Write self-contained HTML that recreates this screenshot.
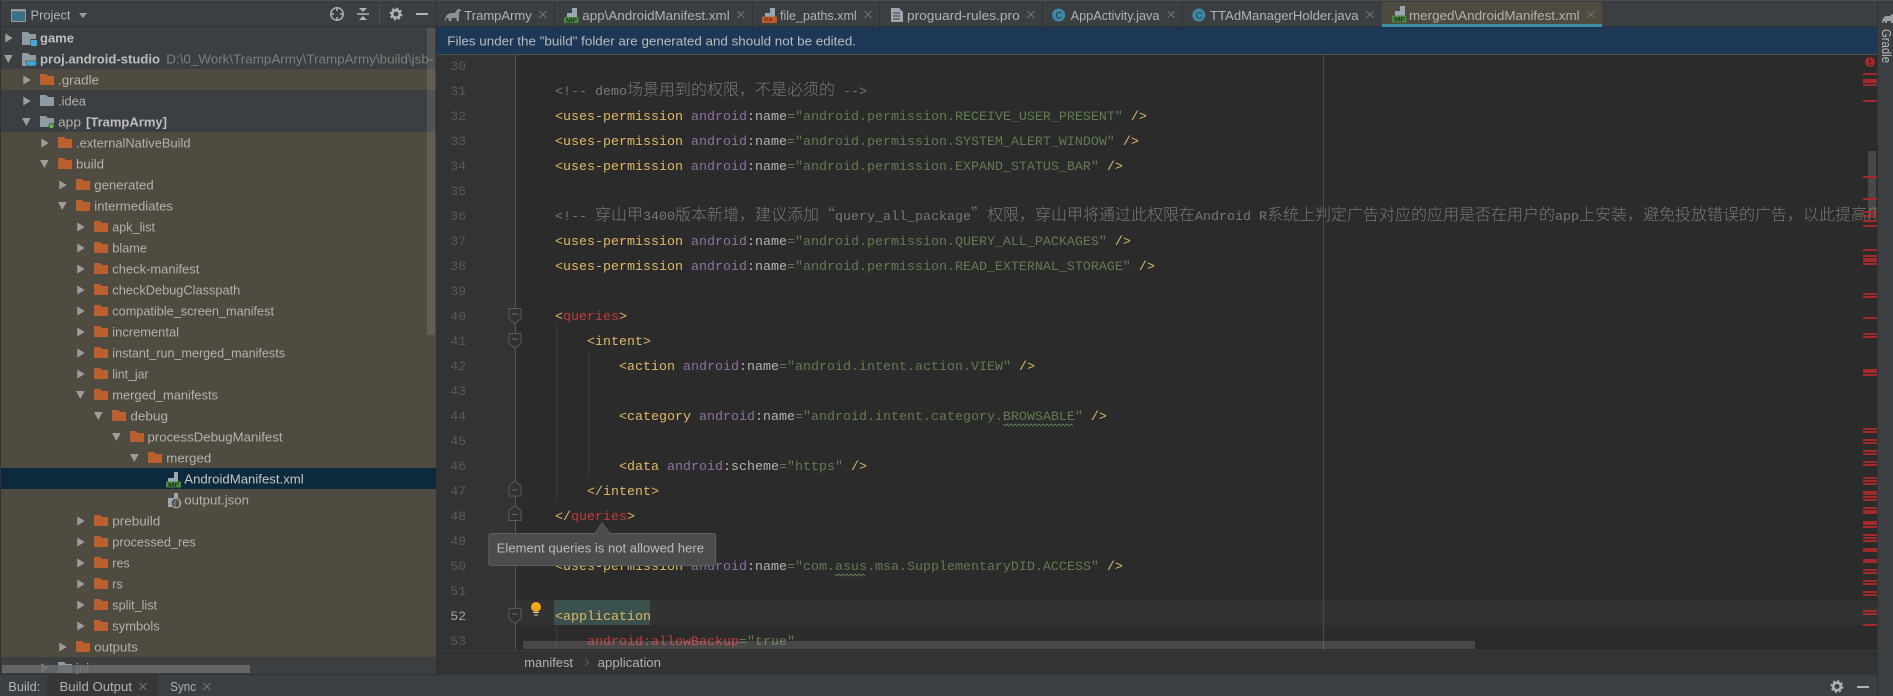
<!DOCTYPE html>
<html><head><meta charset="utf-8"><title>Android Studio</title>
<style>
html,body{margin:0;padding:0;background:#3c3f41;width:1893px;height:696px;overflow:hidden}
svg{display:block}
text{white-space:pre}
.s{font-family:"Liberation Sans","Noto Sans CJK SC",sans-serif;font-size:13px;fill:#b2b2b0}
.b{font-weight:bold;fill:#bcbec0}
.t{fill:#b0b2b4}
.m{font-family:"Liberation Mono","Noto Sans CJK SC",monospace;font-size:13.334px}
.y{fill:#e0b866}.p{fill:#8f70a1}.w{fill:#b4b4b4}.g{fill:#617c52}.c{fill:#787878}.r{fill:#c03a3a}
.k{font-family:"Noto Sans CJK SC",sans-serif;font-size:16px;font-weight:300}
.n{fill:#585a5c;font-size:13px}
.f{fill:#b9602e}.d{fill:#8f9ba3}.a{fill:#9c9e9e}
.x{stroke:#6f7173;stroke-width:1.2;fill:none}
</style></head>
<body>
<svg xmlns="http://www.w3.org/2000/svg" width="1893" height="696" viewBox="0 0 1893 696">
<clipPath id="tc"><rect x="0" y="27" width="436" height="647"/></clipPath>
<clipPath id="ec"><rect x="515" y="55" width="1362" height="595"/></clipPath>
<clipPath id="gc"><rect x="436" y="55" width="79" height="595"/></clipPath>

<rect width="1893" height="696" fill="#3c3f41"/>
<rect width="1893" height="1" fill="#4b4d4f"/>
<rect width="1" height="696" fill="#323232"/>

<!-- project header -->
<rect x="11.5" y="9.5" width="14" height="12" fill="#3b6f86" stroke="#8d9aa3"/>
<rect x="11.5" y="9.5" width="14" height="2" fill="#8d9aa3"/>
<text class="s t" x="30.5" y="19.5" textLength="40" lengthAdjust="spacingAndGlyphs">Project</text>
<polygon points="79,13 87,13 83,18" fill="#9c9e9e"/>
<circle cx="337" cy="14" r="6.2" fill="none" stroke="#afb1b3" stroke-width="1.5"/>
<path d="M337 7v4M337 17v4M330 14h4M340 14h4" stroke="#afb1b3" stroke-width="1.5"/>
<path d="M357 14h12" stroke="#afb1b3" stroke-width="1.5"/>
<polygon points="359,8 367,8 363,12" fill="#afb1b3"/><polygon points="363,16 367,20 359,20" fill="#afb1b3"/>
<rect x="379" y="5" width="1" height="19" fill="#515151"/>
<circle cx="396" cy="14" r="3.8" fill="none" stroke="#afb1b3" stroke-width="2.6"/>
<circle cx="396" cy="14" r="5.6" fill="none" stroke="#afb1b3" stroke-width="1.6" stroke-dasharray="2.2 2.2"/>
<rect x="416" y="13" width="12" height="2" fill="#afb1b3"/>
<rect x="0" y="26" width="436" height="1" fill="#323232"/>

<!-- tree backgrounds -->
<g clip-path="url(#tc)">
<rect x="1" y="69" width="435" height="21" fill="#4f4b41"/>
<rect x="1" y="132" width="435" height="525" fill="#4f4b41"/>
<rect x="1" y="468" width="435" height="21" fill="#0d293e"/>

<!-- arrows -->
<polygon class="a" points="5.3,33.5 12.7,38 5.3,42.5"/>
<polygon class="a" points="4,55 12.7,55 8.3,63"/>
<polygon class="a" points="23.3,75.5 30.7,80 23.3,84.5"/>
<polygon class="a" points="23.3,96.5 30.7,101 23.3,105.5"/>
<polygon class="a" points="22,118 30.7,118 26.3,126"/>
<polygon class="a" points="41.3,138.5 48.7,143 41.3,147.5"/>
<polygon class="a" points="40,160 48.7,160 44.3,168"/>
<polygon class="a" points="59.3,180.5 66.7,185 59.3,189.5"/>
<polygon class="a" points="58,202 66.7,202 62.3,210"/>
<polygon class="a" points="77.3,222.5 84.7,227 77.3,231.5"/>
<polygon class="a" points="77.3,243.5 84.7,248 77.3,252.5"/>
<polygon class="a" points="77.3,264.5 84.7,269 77.3,273.5"/>
<polygon class="a" points="77.3,285.5 84.7,290 77.3,294.5"/>
<polygon class="a" points="77.3,306.5 84.7,311 77.3,315.5"/>
<polygon class="a" points="77.3,327.5 84.7,332 77.3,336.5"/>
<polygon class="a" points="77.3,348.5 84.7,353 77.3,357.5"/>
<polygon class="a" points="77.3,369.5 84.7,374 77.3,378.5"/>
<polygon class="a" points="76,391 84.7,391 80.3,399"/>
<polygon class="a" points="94,412 102.7,412 98.3,420"/>
<polygon class="a" points="112,433 120.7,433 116.3,441"/>
<polygon class="a" points="130,454 138.7,454 134.3,462"/>
<polygon class="a" points="77.3,516.500 84.7,521 77.3,525.5"/>
<polygon class="a" points="77.3,537.5 84.7,542 77.3,546.5"/>
<polygon class="a" points="77.3,558.5 84.7,563 77.3,567.5"/>
<polygon class="a" points="77.3,579.5 84.7,584 77.3,588.5"/>
<polygon class="a" points="77.3,600.5 84.7,605 77.3,609.5"/>
<polygon class="a" points="77.3,621.5 84.7,626 77.3,630.5"/>
<polygon class="a" points="59.3,642.5 66.7,647 59.3,651.5"/>
<polygon class="a" points="41.3,663.5 48.700,668 41.3,672.5"/>

<!-- folders -->
<path class="d" d="M22 32h6l2 2h6v11h-14z"/>
<rect x="30.500" y="39" width="7" height="7" fill="#3c3f41"/><rect x="31" y="40" width="6" height="6" fill="#3fa9dc"/>
<path class="d" d="M22 53h6l2 2h6v11h-14z"/>
<path d="M26 61h11v2c0 2-2 3-4 3h-3c-2 0-4-1-4-3z M36 61h2v2h-2z" fill="#3fa9dc" stroke="#3c3f41" stroke-width=".6"/>
<path class="f" d="M40 74h6l2 2h6v9h-14z"/>
<path class="d" d="M40 95h6l2 2h6v9h-14z"/>
<path class="d" d="M40 116h6l2 2h6v9h-14z"/>
<circle cx="51.500" cy="126" r="3" fill="#3c3f41"/><circle cx="51.500" cy="126" r="2.300" fill="#62b543"/>
<path class="f" d="M58 137h6l2 2h6v9h-14z"/>
<path class="f" d="M58 158h6l2 2h6v9h-14z"/>
<path class="f" d="M76 179h6l2 2h6v9h-14z"/>
<path class="f" d="M76 200h6l2 2h6v9h-14z"/>
<path class="f" d="M94 221h6l2 2h6v9h-14z"/>
<path class="f" d="M94 242h6l2 2h6v9h-14z"/>
<path class="f" d="M94 263h6l2 2h6v9h-14z"/>
<path class="f" d="M94 284h6l2 2h6v9h-14z"/>
<path class="f" d="M94 305h6l2 2h6v9h-14z"/>
<path class="f" d="M94 326h6l2 2h6v9h-14z"/>
<path class="f" d="M94 347h6l2 2h6v9h-14z"/>
<path class="f" d="M94 368h6l2 2h6v9h-14z"/>
<path class="f" d="M94 389h6l2 2h6v9h-14z"/>
<path class="f" d="M112 410h6l2 2h6v9h-14z"/>
<path class="f" d="M130 431h6l2 2h6v9h-14z"/>
<path class="f" d="M148 452h6l2 2h6v9h-14z"/>
<path class="f" d="M94 515h6l2 2h6v9h-14z"/>
<path class="f" d="M94 536h6l2 2h6v9h-14z"/>
<path class="f" d="M94 557h6l2 2h6v9h-14z"/>
<path class="f" d="M94 578h6l2 2h6v9h-14z"/>
<path class="f" d="M94 599h6l2 2h6v9h-14z"/>
<path class="f" d="M94 620h6l2 2h6v9h-14z"/>
<path class="f" d="M76 641h6l2 2h6v9h-14z"/>
<path class="d" d="M58 662h6l2 2h6v9h-14z"/>

<!-- file icons -->
<path d="M174 472h4v10h-10v-4h6z" fill="#9aa7b0"/>
<rect x="166" y="481.500" width="15" height="6" fill="#4b8a3d"/>
<text x="168" y="487" font-family="Liberation Sans" font-size="6.500" font-weight="bold" fill="#1d3320" textLength="11" lengthAdjust="spacingAndGlyphs">MF</text>
<path d="M174 493h4v8h-10v-3h6z" fill="#9aa7b0"/>
<rect x="168" y="498" width="10" height="9" fill="#9aa7b0"/>
<circle cx="176" cy="503" r="4.800" fill="#4f4b41" stroke="#9aa7b0"/>
<text x="173" y="506" font-family="Liberation Mono" font-size="7" fill="#bbb">{}</text>

<!-- tree text -->
<text class="s b" x="40" y="42.500" textLength="34" lengthAdjust="spacingAndGlyphs">game</text>
<text class="s b" x="40" y="63.500" textLength="120" lengthAdjust="spacingAndGlyphs">proj.android-studio</text>
<text class="s" style="fill:#7d7f81" x="166.300" y="63.500" textLength="267" lengthAdjust="spacingAndGlyphs">D:\0_Work\TrampArmy\TrampArmy\build\jsb-</text>
<text class="s" x="58" y="84.500" textLength="41" lengthAdjust="spacingAndGlyphs">.gradle</text>
<text class="s" x="58" y="105.500" textLength="28" lengthAdjust="spacingAndGlyphs">.idea</text>
<text class="s" x="58" y="126.500" textLength="23" lengthAdjust="spacingAndGlyphs">app</text>
<text class="s b" x="86" y="126.500" textLength="81" lengthAdjust="spacingAndGlyphs">[TrampArmy]</text>
<text class="s" x="76" y="147.500" textLength="114.500" lengthAdjust="spacingAndGlyphs">.externalNativeBuild</text>
<text class="s" x="76" y="168.500" textLength="28" lengthAdjust="spacingAndGlyphs">build</text>
<text class="s" x="94.300" y="189.500" textLength="59.400" lengthAdjust="spacingAndGlyphs">generated</text>
<text class="s" x="94.300" y="210.500" textLength="78.700" lengthAdjust="spacingAndGlyphs">intermediates</text>
<text class="s" x="112.300" y="231.500" textLength="42.700" lengthAdjust="spacingAndGlyphs">apk_list</text>
<text class="s" x="112.300" y="252.500" textLength="34.700" lengthAdjust="spacingAndGlyphs">blame</text>
<text class="s" x="112.300" y="273.500" textLength="87" lengthAdjust="spacingAndGlyphs">check-manifest</text>
<text class="s" x="112.300" y="294.500" textLength="128" lengthAdjust="spacingAndGlyphs">checkDebugClasspath</text>
<text class="s" x="112.300" y="315.500" textLength="161.700" lengthAdjust="spacingAndGlyphs">compatible_screen_manifest</text>
<text class="s" x="112.300" y="336.500" textLength="66.700" lengthAdjust="spacingAndGlyphs">incremental</text>
<text class="s" x="112.300" y="357.500" textLength="172.700" lengthAdjust="spacingAndGlyphs">instant_run_merged_manifests</text>
<text class="s" x="112.300" y="378.500" textLength="36.200" lengthAdjust="spacingAndGlyphs">lint_jar</text>
<text class="s" x="112.300" y="399.500" textLength="105.700" lengthAdjust="spacingAndGlyphs">merged_manifests</text>
<text class="s" x="130.400" y="420.500" textLength="37.600" lengthAdjust="spacingAndGlyphs">debug</text>
<text class="s" x="147.500" y="441.500" textLength="135" lengthAdjust="spacingAndGlyphs">processDebugManifest</text>
<text class="s" x="166.300" y="462.500" textLength="45" lengthAdjust="spacingAndGlyphs">merged</text>
<text class="s" style="fill:#c4c6c8" x="184.300" y="483.500" textLength="119.400" lengthAdjust="spacingAndGlyphs">AndroidManifest.xml</text>
<text class="s" x="184.300" y="504.500" textLength="64.700" lengthAdjust="spacingAndGlyphs">output.json</text>
<text class="s" x="112.300" y="525.500" textLength="48" lengthAdjust="spacingAndGlyphs">prebuild</text>
<text class="s" x="112.300" y="546.500" textLength="83.400" lengthAdjust="spacingAndGlyphs">processed_res</text>
<text class="s" x="112.300" y="567.500" textLength="17.400" lengthAdjust="spacingAndGlyphs">res</text>
<text class="s" x="112.300" y="588.500" textLength="10.400" lengthAdjust="spacingAndGlyphs">rs</text>
<text class="s" x="112.300" y="609.500" textLength="44.700" lengthAdjust="spacingAndGlyphs">split_list</text>
<text class="s" x="112.300" y="630.500" textLength="47.400" lengthAdjust="spacingAndGlyphs">symbols</text>
<text class="s" x="94.300" y="651.500" textLength="43.400" lengthAdjust="spacingAndGlyphs">outputs</text>
<text class="s" x="76" y="672.500" textLength="13" lengthAdjust="spacingAndGlyphs">jni</text>

<rect x="427" y="28" width="8" height="307" fill="#fff" fill-opacity=".11"/>
<rect x="2" y="665" width="248" height="8" fill="#6a6c6e" fill-opacity=".85"/>
</g>

<!-- gutter & editor -->
<rect x="436" y="55" width="79" height="595" fill="#313335"/>
<rect x="515" y="55" width="1348" height="595" fill="#2b2b2b"/>
<rect x="1863" y="55" width="14" height="595" fill="#2b2b2b"/>
<rect x="436" y="0" width="1" height="674" fill="#323232"/>
<rect x="515" y="600" width="1362" height="25" fill="#323232"/>
<rect x="554" y="600" width="96" height="25" fill="#3b514d"/>
<rect x="1323" y="55" width="1" height="595" fill="#4a4a4a"/>
<rect x="515" y="55" width="1" height="595" fill="#555555"/>
<rect x="556" y="325" width="1" height="175" fill="#3b3b3b"/>
<rect x="588" y="350" width="1" height="125" fill="#3b3b3b"/>
<rect x="556" y="625" width="1" height="25" fill="#3b3b3b"/>

<!-- line numbers -->
<g class="m" clip-path="url(#gc)">
<text class="m n" x="466" y="70" text-anchor="end">30</text>
<text class="m n" x="466" y="95" text-anchor="end">31</text>
<text class="m n" x="466" y="120" text-anchor="end">32</text>
<text class="m n" x="466" y="145" text-anchor="end">33</text>
<text class="m n" x="466" y="170" text-anchor="end">34</text>
<text class="m n" x="466" y="195" text-anchor="end">35</text>
<text class="m n" x="466" y="220" text-anchor="end">36</text>
<text class="m n" x="466" y="245" text-anchor="end">37</text>
<text class="m n" x="466" y="270" text-anchor="end">38</text>
<text class="m n" x="466" y="295" text-anchor="end">39</text>
<text class="m n" x="466" y="320" text-anchor="end">40</text>
<text class="m n" x="466" y="345" text-anchor="end">41</text>
<text class="m n" x="466" y="370" text-anchor="end">42</text>
<text class="m n" x="466" y="395" text-anchor="end">43</text>
<text class="m n" x="466" y="420" text-anchor="end">44</text>
<text class="m n" x="466" y="445" text-anchor="end">45</text>
<text class="m n" x="466" y="470" text-anchor="end">46</text>
<text class="m n" x="466" y="495" text-anchor="end">47</text>
<text class="m n" x="466" y="520" text-anchor="end">48</text>
<text class="m n" x="466" y="545" text-anchor="end">49</text>
<text class="m n" x="466" y="570" text-anchor="end">50</text>
<text class="m n" x="466" y="595" text-anchor="end">51</text>
<text class="m n" style="fill:#a4a3a3" x="466" y="620" text-anchor="end">52</text>
<text class="m n" x="466" y="645" text-anchor="end">53</text>
</g>

<!-- fold markers -->
<path d="M509 308.500h12v10l-6 5l-6-5z" fill="#2f3133" stroke="#5a5a5a"/><path d="M512 314h6" stroke="#6a6a6a"/>
<path d="M509 333.500h12v10l-6 5l-6-5z" fill="#2f3133" stroke="#5a5a5a"/><path d="M512 339h6" stroke="#6a6a6a"/>
<path d="M509 496h12v-10l-6-5l-6 5z" fill="#2f3133" stroke="#5a5a5a"/><path d="M512 490h6" stroke="#6a6a6a"/>
<path d="M509 520.500h12v-10l-6-5l-6 5z" fill="#2f3133" stroke="#5a5a5a"/><path d="M512 514.500h6" stroke="#6a6a6a"/>
<path d="M509 608.500h12v10l-6 5l-6-5z" fill="#2f3133" stroke="#5a5a5a"/><path d="M512 614h6" stroke="#6a6a6a"/>

<!-- bulb -->
<circle cx="536" cy="607" r="5" fill="#f2a71e"/>
<rect x="533" y="612" width="6" height="1" fill="#c9c9c9"/><rect x="534" y="614.500" width="4" height="1" fill="#c9c9c9"/>

<!-- code -->
<g clip-path="url(#ec)">
<text class="m" x="555" y="95"><tspan class="c">&lt;!-- demo</tspan><tspan class="c k">场景用到的权限，不是必须的</tspan><tspan class="c"> --&gt;</tspan></text>
<text class="m" x="555" y="120"><tspan class="y">&lt;uses-permission</tspan> <tspan class="p">android</tspan><tspan class="w">:name</tspan><tspan class="g">="android.permission.RECEIVE_USER_PRESENT"</tspan> <tspan class="y">/&gt;</tspan></text>
<text class="m" x="555" y="145"><tspan class="y">&lt;uses-permission</tspan> <tspan class="p">android</tspan><tspan class="w">:name</tspan><tspan class="g">="android.permission.SYSTEM_ALERT_WINDOW"</tspan> <tspan class="y">/&gt;</tspan></text>
<text class="m" x="555" y="170"><tspan class="y">&lt;uses-permission</tspan> <tspan class="p">android</tspan><tspan class="w">:name</tspan><tspan class="g">="android.permission.EXPAND_STATUS_BAR"</tspan> <tspan class="y">/&gt;</tspan></text>
<text class="m" x="555" y="220"><tspan class="c">&lt;!-- </tspan><tspan class="c k">穿山甲</tspan><tspan class="c">3400</tspan><tspan class="c k">版本新增，建议添加“</tspan><tspan class="c">query_all_package</tspan><tspan class="c k">”权限，穿山甲将通过此权限在</tspan><tspan class="c">Android R</tspan><tspan class="c k">系统上判定广告对应的应用是否在用户的</tspan><tspan class="c">app</tspan><tspan class="c k">上安装，避免投放错误的广告，以此提高用户体验</tspan></text>
<text class="m" x="555" y="245"><tspan class="y">&lt;uses-permission</tspan> <tspan class="p">android</tspan><tspan class="w">:name</tspan><tspan class="g">="android.permission.QUERY_ALL_PACKAGES"</tspan> <tspan class="y">/&gt;</tspan></text>
<text class="m" x="555" y="270"><tspan class="y">&lt;uses-permission</tspan> <tspan class="p">android</tspan><tspan class="w">:name</tspan><tspan class="g">="android.permission.READ_EXTERNAL_STORAGE"</tspan> <tspan class="y">/&gt;</tspan></text>
<text class="m" x="555" y="320"><tspan class="y">&lt;</tspan><tspan class="r">queries</tspan><tspan class="y">&gt;</tspan></text>
<text class="m" x="587" y="345"><tspan class="y">&lt;intent&gt;</tspan></text>
<text class="m" x="619" y="370"><tspan class="y">&lt;action</tspan> <tspan class="p">android</tspan><tspan class="w">:name</tspan><tspan class="g">="android.intent.action.VIEW"</tspan> <tspan class="y">/&gt;</tspan></text>
<text class="m" x="619" y="420"><tspan class="y">&lt;category</tspan> <tspan class="p">android</tspan><tspan class="w">:name</tspan><tspan class="g">="android.intent.category.BROWSABLE"</tspan> <tspan class="y">/&gt;</tspan></text>
<path d="M1003 424l2 2l2-2l2 2l2-2l2 2l2-2l2 2l2-2l2 2l2-2l2 2l2-2l2 2l2-2l2 2l2-2l2 2l2-2l2 2l2-2l2 2l2-2l2 2l2-2l2 2l2-2l2 2l2-2l2 2l2-2l2 2l2-2l2 2l2-2l2 2" fill="none" stroke="#6a8759" stroke-width=".8"/>
<text class="m" x="619" y="470"><tspan class="y">&lt;data</tspan> <tspan class="p">android</tspan><tspan class="w">:scheme</tspan><tspan class="g">="https"</tspan> <tspan class="y">/&gt;</tspan></text>
<text class="m" x="587" y="495"><tspan class="y">&lt;/intent&gt;</tspan></text>
<text class="m" x="555" y="520"><tspan class="y">&lt;/</tspan><tspan class="r">queries</tspan><tspan class="y">&gt;</tspan></text>
<text class="m" x="555" y="570"><tspan class="y">&lt;uses-permission</tspan> <tspan class="p">android</tspan><tspan class="w">:name</tspan><tspan class="g">="com.asus.msa.SupplementaryDID.ACCESS"</tspan> <tspan class="y">/&gt;</tspan></text>
<path d="M835 574l2 2l2-2l2 2l2-2l2 2l2-2l2 2l2-2l2 2l2-2l2 2l2-2l2 2l2-2l2 2" fill="none" stroke="#6a8759" stroke-width=".8"/>
<text class="m" x="555" y="620"><tspan class="y">&lt;application</tspan></text>
<text class="m" x="587" y="645"><tspan class="r">android:allowBackup</tspan><tspan class="g">="true"</tspan></text>
</g>

<!-- editor hscroll & stripe -->
<rect x="523" y="641" width="952" height="8" fill="#fff" fill-opacity=".14"/>
<rect x="1868" y="151" width="8" height="67" fill="#fff" fill-opacity=".14"/>
<circle cx="1870" cy="62" r="5" fill="#a82828"/>
<rect x="1869.200" y="58.500" width="1.600" height="4.500" fill="#2b2b2b"/><rect x="1869.200" y="64" width="1.600" height="1.500" fill="#2b2b2b"/>
<path fill="#a32a2a" d="M1863 73h14v2h-14zM1863 79h14v4h-14zM1863 84h14v2h-14zM1863 100h14v2h-14zM1863 176h14v2h-14zM1863 198h14v2h-14zM1863 211h14v2h-14zM1863 215h14v2h-14zM1863 220h14v2h-14zM1863 225h14v2h-14zM1863 249h14v2h-14zM1863 255h14v2h-14zM1863 258h14v4h-14zM1863 263h14v2h-14zM1863 293h14v2h-14zM1863 296h14v2h-14zM1863 317h14v2h-14zM1863 333h14v2h-14zM1863 336h14v2h-14zM1863 369h14v4h-14zM1863 374h14v2h-14zM1863 428h14v2h-14zM1863 431h14v2h-14zM1863 439h14v2h-14zM1863 442h14v2h-14zM1863 450h14v2h-14zM1863 453h14v2h-14zM1863 461h14v2h-14zM1863 464h14v2h-14zM1863 477h14v2h-14zM1863 480h14v2h-14zM1863 483h14v2h-14zM1863 491h14v4h-14zM1863 496h14v2h-14zM1863 499h14v2h-14zM1863 507h14v2h-14zM1863 510h14v4h-14zM1863 521h14v4h-14zM1863 526h14v2h-14zM1863 534h14v2h-14zM1863 537h14v2h-14zM1863 540h14v2h-14zM1863 548h14v4h-14zM1863 559h14v4h-14zM1863 569h14v2h-14zM1863 572h14v2h-14zM1863 580h14v2h-14zM1863 583h14v2h-14zM1863 591h14v2h-14zM1863 594h14v2h-14zM1863 610h14v2h-14zM1863 613h14v2h-14zM1863 624h14v2h-14z"/>

<!-- tooltip -->
<path d="M491.300 533.500H595l7-10.500l8 10.500h103.200a2.500 2.500 0 0 1 2.500 2.500v27a2.500 2.500 0 0 1-2.500 2.500H491.300a2.500 2.500 0 0 1-2.500-2.500v-27a2.500 2.500 0 0 1 2.500-2.500z" fill="#4b4d4d" stroke="#5f5f5f"/>
<text class="s" style="fill:#bbbbbb" x="496.700" y="552.500" textLength="207.300" lengthAdjust="spacingAndGlyphs">Element queries is not allowed here</text>

<!-- tabs -->
<rect x="437" y="1" width="1440" height="26" fill="#3c3f41"/>
<rect x="437" y="26" width="1440" height="1" fill="#323232"/>
<rect x="554" y="2" width="1" height="24" fill="#323232"/>
<rect x="752" y="2" width="1" height="24" fill="#323232"/>
<rect x="879" y="2" width="1" height="24" fill="#323232"/>
<rect x="1042" y="2" width="1" height="24" fill="#323232"/>
<rect x="1182" y="2" width="1" height="24" fill="#323232"/>
<rect x="1382" y="2" width="220" height="24" fill="#4f4b41"/>
<rect x="1382" y="24" width="220" height="3" fill="#3d8fa8"/>

<path d="M445 21c0-4 2-8 7-8h3c1-2 2-4 4-4c1.500 0 2 1 2 2c-1 0-2 1-2 3v7h-2.500v-3h-5v3h-3v-3h-2l-1 3z" fill="#8b9297"/>
<text class="s t" x="464.300" y="20" textLength="67.400" lengthAdjust="spacingAndGlyphs">TrampArmy</text>
<path class="x" d="M539.500 11l7 7M546.500 11l-7 7"/>

<path d="M572 8h5v10h-10v-5h5z" fill="#9aa7b0"/><rect x="564" y="17" width="14.500" height="6" fill="#4b8a3d"/>
<text x="566" y="22.500" font-family="Liberation Sans" font-size="6.500" font-weight="bold" fill="#1d3320" textLength="11" lengthAdjust="spacingAndGlyphs">MF</text>
<text class="s t" x="582.300" y="20" textLength="147.400" lengthAdjust="spacingAndGlyphs">app\AndroidManifest.xml</text>
<path class="x" d="M737.500 11l7 7M744.500 11l-7 7"/>

<path d="M770 8h5v10h-10v-5h5z" fill="#9aa7b0"/><rect x="762" y="16.500" width="15" height="6.500" fill="#c1592b"/>
<text x="764" y="22" font-family="Liberation Mono" font-size="7" fill="#2e1a10">&lt;&gt;</text>
<text class="s t" x="780" y="20" textLength="76.700" lengthAdjust="spacingAndGlyphs">file_paths.xml</text>
<path class="x" d="M864.500 11l7 7M871.500 11l-7 7"/>

<path d="M891 8h8l4 4v10h-12z" fill="#9aa7b0"/><path d="M893 13h7M893 16h7M893 19h7" stroke="#3c3f41"/>
<text class="s t" x="907" y="20" textLength="112.700" lengthAdjust="spacingAndGlyphs">proguard-rules.pro</text>
<path class="x" d="M1027.500 11l7 7M1034.500 11l-7 7"/>

<circle cx="1058.600" cy="15" r="6.500" fill="#3f87a6"/><text x="1055.500" y="18.500" font-family="Liberation Sans" font-size="9" fill="#1c3844">C</text>
<text class="s t" x="1070.600" y="20" textLength="88.900" lengthAdjust="spacingAndGlyphs">AppActivity.java</text>
<path class="x" d="M1167.500 11l7 7M1174.500 11l-7 7"/>

<circle cx="1198.800" cy="15" r="6.500" fill="#3f87a6"/><text x="1195.700" y="18.500" font-family="Liberation Sans" font-size="9" fill="#1c3844">C</text>
<text class="s t" x="1210" y="20" textLength="148.600" lengthAdjust="spacingAndGlyphs">TTAdManagerHolder.java</text>
<path class="x" d="M1366.500 11l7 7M1373.500 11l-7 7"/>

<path d="M1400 6h5v10h-10v-5h5z" fill="#9aa7b0"/><rect x="1392" y="15.500" width="14.500" height="7" fill="#4b8a3d"/>
<text x="1394" y="21.500" font-family="Liberation Sans" font-size="6.500" font-weight="bold" fill="#1d3320" textLength="11" lengthAdjust="spacingAndGlyphs">MF</text>
<text class="s t" x="1409" y="20" textLength="170.600" lengthAdjust="spacingAndGlyphs">merged\AndroidManifest.xml</text>
<path class="x" d="M1587.500 11l7 7M1594.500 11l-7 7"/>

<!-- notification -->
<rect x="437" y="27" width="1440" height="27" fill="#1d3857"/>
<rect x="437" y="54" width="1440" height="1" fill="#515151"/>
<text class="s" style="fill:#bbbbbb" x="447.300" y="45.500" textLength="408.700" lengthAdjust="spacingAndGlyphs">Files under the "build" folder are generated and should not be edited.</text>

<!-- breadcrumb -->
<rect x="437" y="650" width="1440" height="25" fill="#313335"/>
<rect x="437" y="650" width="1440" height="1" fill="#393b3d"/>
<text class="s t" x="524.300" y="667" textLength="48.700" lengthAdjust="spacingAndGlyphs">manifest</text>
<path d="M585 659l3.500 3.500l-3.500 3.500" fill="none" stroke="#5e6163"/>
<text class="s t" x="597.700" y="667" textLength="63.300" lengthAdjust="spacingAndGlyphs">application</text>

<!-- bottom -->
<rect x="0" y="674" width="1877" height="22" fill="#3c3f41"/>
<rect x="0" y="674" width="1877" height="1" fill="#323232"/>
<rect x="47" y="675" width="111" height="21" fill="#353739"/>
<text class="s t" x="8.300" y="691" textLength="32" lengthAdjust="spacingAndGlyphs">Build:</text>
<text class="s t" x="59.500" y="691" textLength="72.500" lengthAdjust="spacingAndGlyphs">Build Output</text>
<path class="x" d="M139.500 683l7 7M146.500 683l-7 7"/>
<text class="s t" x="170.300" y="691" textLength="25.700" lengthAdjust="spacingAndGlyphs">Sync</text>
<path class="x" d="M203.500 683l7 7M210.500 683l-7 7"/>
<circle cx="1837" cy="686.500" r="3.800" fill="none" stroke="#afb1b3" stroke-width="2.600"/>
<circle cx="1837" cy="686.500" r="5.600" fill="none" stroke="#afb1b3" stroke-width="1.600" stroke-dasharray="2.200 2.200"/>
<rect x="1857" y="686" width="12" height="2" fill="#afb1b3"/>

<!-- right strip -->
<rect x="1877" y="1" width="16" height="695" fill="#3c3f41"/>
<rect x="1877" y="1" width="1" height="695" fill="#323232"/>
<path d="M1882 23c0-4 2-7 5-7h3c1-1 2-2 3-2v9h-2v-2h-4v2h-2v-2h-1l-1 2z" fill="#9aa0a4"/>
<text class="s" style="fill:#b8babc" transform="translate(1882,29) rotate(90)" textLength="34" lengthAdjust="spacingAndGlyphs">Gradle</text>
</svg>
</body></html>
